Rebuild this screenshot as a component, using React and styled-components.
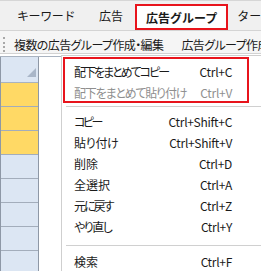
import styled, { createGlobalStyle } from 'styled-components';

const GlobalStyle = createGlobalStyle`
  html, body {
    margin: 0;
    padding: 0;
    background: #ffffff;
  }
  body {
    font-family: "Noto Sans CJK JP", "Noto Sans", sans-serif;
    font-size: 12px;
    color: #1a1a1a;
  }
`;

const tabs = [
  { label: 'キーワード' },
  { label: '広告' },
  { label: '広告グループ', active: true },
  { label: 'ターゲット' },
];

// tight: per-label letter spacing so the kana come out as narrow as in the original UI font
const menuTop = [
  { label: '配下をまとめてコピー', key: 'Ctrl+C', tight: -2 },
  { label: '配下をまとめて貼り付け', key: 'Ctrl+V', tight: -1.2, disabled: true },
];

const menuEdit = [
  { label: 'コピー', key: 'Ctrl+Shift+C', tight: -2.5 },
  { label: '貼り付け', key: 'Ctrl+Shift+V', tight: -0.3 },
  { label: '削除', key: 'Ctrl+D', tight: 0 },
  { label: '全選択', key: 'Ctrl+A', tight: 0 },
  { label: '元に戻す', key: 'Ctrl+Z', tight: -2 },
  { label: 'やり直し', key: 'Ctrl+Y', tight: -1.5 },
];

const rows = ['yellow', 'yellow', 'yellow', 'blue', 'blue', 'blue', 'blue', 'blue'];

export default function App() {
  return (
    <>
      <GlobalStyle />
      <Page>
        <TabBar>
          {tabs.map((t) => (
            <Tab key={t.label} $active={t.active}>
              {t.label}
            </Tab>
          ))}
        </TabBar>

        <Toolbar>
          <Grip />
          <ToolButton>複数の広告グループ作成・編集</ToolButton>
          <ToolSep />
          <ToolButton>広告グループ作成</ToolButton>
        </Toolbar>

        <Grid>
          <HeaderColumn>
            <CornerCell />
            {rows.map((c, i) => (
              <RowCell key={i} $tone={c} />
            ))}
          </HeaderColumn>
        </Grid>

        <Menu>
          {menuTop.map((m) => (
            <MenuItem key={m.label} $disabled={m.disabled}>
              <Label $tight={m.tight}>{m.label}</Label>
              <Shortcut>{m.key}</Shortcut>
            </MenuItem>
          ))}
          <Separator $before={3} $after={4} />
          {menuEdit.map((m) => (
            <MenuItem key={m.label}>
              <Label $tight={m.tight}>{m.label}</Label>
              <Shortcut>{m.key}</Shortcut>
            </MenuItem>
          ))}
          <Separator $before={8} $after={5} />
          <MenuItem>
            <Label $tight={0}>検索</Label>
            <Shortcut>Ctrl+F</Shortcut>
          </MenuItem>
          <Highlight />
        </Menu>
      </Page>
    </>
  );
}

const Page = styled.div`
  position: relative;
  width: 261px;
  height: 271px;
  overflow: hidden;
  background: #ffffff;
`;

const TabBar = styled.div`
  display: flex;
  align-items: flex-end;
  height: 29px;
  padding-left: 5px;
  background: #f0f0f0;
  border-top: 1px solid #d6d6d6;
  border-bottom: 1px solid #d4d4d4;
  white-space: nowrap;
`;

const Tab = styled.div`
  box-sizing: border-box;
  display: flex;
  align-items: center;
  height: ${(p) => (p.$active ? '26px' : '29px')};
  padding: ${(p) => (p.$active ? '0 9px 0 9px' : '0 12px')};
  border: ${(p) => (p.$active ? '2px solid #e8141c' : 'none')};
  background: ${(p) => (p.$active ? '#ffffff' : 'transparent')};
  font-weight: ${(p) => (p.$active ? 700 : 400)};
  font-size: 12px;
  color: #1a1a1a;
  &:first-child {
    letter-spacing: -0.4px;
  }
  &:last-child {
    padding-left: 9px;
  }
`;

const Toolbar = styled.div`
  box-sizing: border-box;
  display: flex;
  align-items: center;
  height: 23px;
  padding: 4px 0 0 3px;
  background: #f5f5f5;
  border-bottom: 1px solid #d2d2d2;
  white-space: nowrap;
  font-feature-settings: "palt";
`;

const Grip = styled.div`
  width: 0;
  height: 15px;
  border-left: 2px dotted #a8a8a8;
  margin-right: 9px;
`;

const ToolButton = styled.span`
  font-size: 12px;
  letter-spacing: -0.6px;
  color: #1a1a1a;
`;

const ToolSep = styled.div`
  width: 1px;
  height: 15px;
  background: #c4c4c4;
  margin: 0 8px 0 10px;
`;

const Grid = styled.div`
  margin-top: 2px;
  border-top: 1px solid #a9b3c0;
`;

const HeaderColumn = styled.div`
  display: flex;
  flex-direction: column;
  width: 37px;
  border-left: 1px solid #8e98a6;
  border-right: 1px solid #8e98a6;
`;

const CornerCell = styled.div`
  position: relative;
  height: 25px;
  background: #dce6f3;
  border-bottom: 1px solid #a9b3c0;
  &::after {
    content: '';
    position: absolute;
    right: 2px;
    bottom: 5px;
    width: 9px;
    height: 9px;
    background: #a9b6c8;
    clip-path: polygon(100% 0, 100% 100%, 0 100%);
  }
`;

const RowCell = styled.div`
  height: 23px;
  background: ${(p) => (p.$tone === 'yellow' ? '#ffd965' : '#dce6f3')};
  border-bottom: 1px solid #a3adbb;
`;

const Menu = styled.div`
  position: absolute;
  left: 61px;
  top: 55px;
  width: 230px;
  padding: 5px 0;
  background: #ffffff;
  border: 1px solid #cfcfcf;
  font-feature-settings: "palt";
`;

const MenuItem = styled.div`
  display: flex;
  justify-content: space-between;
  align-items: center;
  height: 21px;
  padding: 0 60px 0 12px;
  font-size: 12px;
  color: ${(p) => (p.$disabled ? '#8f8f8f' : '#1a1a1a')};
  white-space: nowrap;
`;

const Label = styled.span`
  letter-spacing: ${(p) => p.$tight}px;
`;

const Shortcut = styled.span`
  font-feature-settings: normal;
  letter-spacing: -0.3px;
`;

const Separator = styled.div`
  height: 1px;
  margin: ${(p) => p.$before}px 0 ${(p) => p.$after}px 4px;
  background: #d0d0d0;
`;

const Highlight = styled.div`
  position: absolute;
  left: 1px;
  top: 1px;
  box-sizing: border-box;
  width: 186px;
  height: 46px;
  border: 2px solid #e8141c;
  pointer-events: none;
`;
